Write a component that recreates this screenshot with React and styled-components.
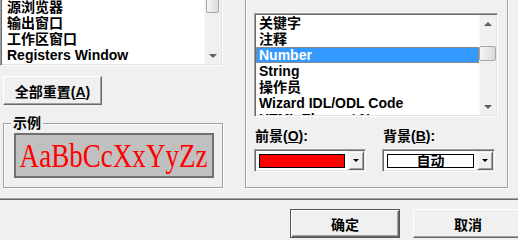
import React from "react";
import styled, { createGlobalStyle, css } from "styled-components";

const GlobalStyle = createGlobalStyle`
  html, body {
    margin: 0;
    padding: 0;
    background: #f0f0f0;
  }
  #root {
    width: 518px;
    height: 240px;
    overflow: hidden;
  }
`;

const sunken = css`
  box-sizing: border-box;
  border: 1px solid;
  border-color: #a0a0a0 #ffffff #ffffff #a0a0a0;
  box-shadow: inset 1px 1px #696969, inset -1px -1px #e3e3e3;
  padding: 1px;
`;

const Dialog = styled.div`
  width: 518px;
  height: 240px;
  overflow: hidden;
  background: #f0f0f0;
  font-family: "Liberation Sans", "Noto Sans CJK SC", sans-serif;
  font-size: 14px;
  font-weight: 700;
  color: #000;
  display: flex;
  flex-direction: column;
`;

const TopArea = styled.div`
  display: flex;
  align-items: flex-start;
  height: 188px;
  flex-shrink: 0;
`;

const LeftColumn = styled.div`
  width: 223px;
  flex-shrink: 0;
  display: flex;
  flex-direction: column;
`;

const ListFrame = styled.div`
  ${sunken}
  width: ${(p) => p.$width}px;
  height: ${(p) => p.$height}px;
  margin-top: ${(p) => p.$top || 0}px;
  display: flex;
  background: #fff;
  overflow: hidden;
`;

const Rows = styled.div`
  flex: 1;
  min-width: 0;
  overflow: hidden;
`;

const Row = styled.div`
  height: 16px;
  line-height: 16px;
  padding-left: ${(p) => p.$pad}px;
  white-space: nowrap;
  ${(p) =>
    p.$selected &&
    css`
      background: #3399ff;
      color: #fff;
      outline: 1px dotted #e07a1f;
      outline-offset: -1px;
    `}
`;

const ScrollBar = styled.div`
  width: 17px;
  flex-shrink: 0;
  display: flex;
  flex-direction: column;
  background: #f0f0f0;
  box-shadow: inset 1px 0 #f8f8f8;
`;

const ScrollArrow = styled.div`
  height: 17px;
  flex-shrink: 0;
  display: flex;
  align-items: center;
  justify-content: center;

  &::after {
    content: "";
    border-left: 4px solid transparent;
    border-right: 4px solid transparent;
    ${(p) =>
      p.$down
        ? css`border-top: 4px solid #606060;`
        : css`border-bottom: 4px solid #606060;`}
  }
`;

const Thumb = styled.div`
  box-sizing: border-box;
  height: ${(p) => p.$height}px;
  margin: ${(p) => p.$offset}px ${(p) => p.$inset}px 0;
  border: 1px solid #a8a8a8;
  border-radius: 2px;
  background: linear-gradient(to right, #f6f6f6, #dadada);
`;

const Spacer = styled.div`
  flex: 1;
`;

const PushButton = styled.button`
  box-sizing: border-box;
  width: ${(p) => p.$width}px;
  height: ${(p) => p.$height}px;
  margin: 0;
  padding: 0;
  flex-shrink: 0;
  font: inherit;
  color: #000;
  background: #f0f0f0;
  border: 1px solid;
  border-color: #ffffff #696969 #696969 #ffffff;
  box-shadow: inset -1px -1px #a0a0a0;
  ${(p) =>
    p.$default &&
    css`
      border-color: #555555;
      box-shadow: inset 1px 1px #ffffff, inset -1px -1px #696969,
        inset -2px -2px #a0a0a0, inset 0 0 0 1px #888;
    `}
`;

const ResetButton = styled(PushButton)`
  margin: 10px 0 0 3px;
`;

const GroupBox = styled.div`
  position: relative;
  box-sizing: border-box;
  border: 1px solid #a0a0a0;
  box-shadow: inset 1px 1px #ffffff, 1px 1px #ffffff;
`;

const SampleGroup = styled(GroupBox)`
  width: 220px;
  height: 65px;
  margin: 18px 0 0 3px;
  padding: 9px 0 0 10px;
`;

const GroupLegend = styled.span`
  position: absolute;
  top: -9px;
  left: 7px;
  padding: 0 2px;
  line-height: 16px;
  background: #f0f0f0;
`;

const SampleBox = styled.div`
  box-sizing: border-box;
  width: 200px;
  height: 45px;
  background: #c0c0c0;
  border: 2px solid #707070;
  display: flex;
  align-items: center;
  justify-content: center;
  overflow: hidden;
`;

const SampleText = styled.span`
  display: inline-block;
  font-family: "Liberation Serif", serif;
  font-weight: 400;
  font-size: 33px;
  line-height: 1;
  color: #ff0000;
  transform: scaleX(0.82);
  white-space: nowrap;
  margin-top: 2px;
`;

const ColorGroup = styled(GroupBox)`
  width: 263px;
  height: 218px;
  margin: -30px 0 0 22px;
  padding: 13px 0 0 8px;
  flex-shrink: 0;
`;

const FieldLabel = styled.div`
  height: 16px;
  line-height: 16px;
  padding-left: 1px;
  white-space: nowrap;
`;

const FieldRow = styled.div`
  display: flex;
  gap: 16px;
  margin-top: 11px;
`;

const Field = styled.div`
  width: ${(p) => p.$width}px;
  display: flex;
  flex-direction: column;
`;

const Combo = styled.div`
  ${sunken}
  height: 23px;
  margin-top: 5px;
  display: flex;
  background: #fff;
`;

const Swatch = styled.div`
  box-sizing: border-box;
  flex: 1;
  height: 14px;
  margin: 3px 3px 0 3px;
  border: 1px solid #000;
  background: ${(p) => p.$color};
  display: flex;
  justify-content: center;
  line-height: 13px;
  overflow: visible;
  white-space: nowrap;
`;

const DropButton = styled.div`
  box-sizing: border-box;
  width: 16px;
  height: 19px;
  flex-shrink: 0;
  background: #f0f0f0;
  border: 1px solid;
  border-color: #f0f0f0 #696969 #696969 #f0f0f0;
  box-shadow: inset 1px 1px #ffffff, inset -1px -1px #a0a0a0;
  display: flex;
  align-items: center;
  justify-content: center;

  &::after {
    content: "";
    border-left: 3px solid transparent;
    border-right: 3px solid transparent;
    border-top: 3px solid #000;
  }
`;

const Separator = styled.div`
  flex-shrink: 0;
  margin-top: 10px;
  border-top: 1px solid #a0a0a0;
  border-bottom: 1px solid #696969;
`;

const ButtonRow = styled.div`
  display: flex;
  gap: 13px;
  margin-top: 9px;
  padding-left: 290px;
`;

const categories = ["源窗口", "Memory 窗口", "源浏览器", "输出窗口", "工作区窗口", "Registers Window"];

const colorItems = [
  "关键字",
  "注释",
  "Number",
  "String",
  "操作员",
  "Wizard IDL/ODL Code",
  "HTML Element Name",
];

export default function App() {
  return (
    <Dialog>
      <GlobalStyle />
      <TopArea>
        <LeftColumn>
          <ListFrame $width={223} $height={101} $top={-35}>
            <Rows>
              {categories.map((c) => (
                <Row key={c} $pad={5}>
                  {c}
                </Row>
              ))}
            </Rows>
            <ScrollBar>
              <ScrollArrow />
              <Thumb $height={23} $offset={6} $inset={2} />
              <Spacer />
              <ScrollArrow $down />
            </ScrollBar>
          </ListFrame>

          <ResetButton $width={99} $height={29}>
            全部重置(<u>A</u>)
          </ResetButton>

          <SampleGroup>
            <GroupLegend>示例</GroupLegend>
            <SampleBox>
              <SampleText>AaBbCcXxYyZz</SampleText>
            </SampleBox>
          </SampleGroup>
        </LeftColumn>

        <ColorGroup>
          <FieldLabel>
            颜色(<u>C</u>):
          </FieldLabel>
          <ListFrame $width={244} $height={104} $top={13}>
            <Rows>
              {colorItems.map((c) => (
                <Row key={c} $pad={3} $selected={c === "Number"}>
                  {c}
                </Row>
              ))}
            </Rows>
            <ScrollBar>
              <ScrollArrow />
              <Thumb $height={15} $offset={14} $inset={0} />
              <Spacer />
              <ScrollArrow $down />
            </ScrollBar>
          </ListFrame>

          <FieldRow>
            <Field $width={112}>
              <FieldLabel>
                前景(<u>O</u>):
              </FieldLabel>
              <Combo>
                <Swatch $color="#ff0000" />
                <DropButton />
              </Combo>
            </Field>
            <Field $width={113}>
              <FieldLabel>
                背景(<u>B</u>):
              </FieldLabel>
              <Combo>
                <Swatch $color="#ffffff">自动</Swatch>
                <DropButton />
              </Combo>
            </Field>
          </FieldRow>
        </ColorGroup>
      </TopArea>

      <Separator />

      <ButtonRow>
        <PushButton $width={110} $height={29} $default>
          确定
        </PushButton>
        <PushButton $width={110} $height={29}>
          取消
        </PushButton>
      </ButtonRow>
    </Dialog>
  );
}
